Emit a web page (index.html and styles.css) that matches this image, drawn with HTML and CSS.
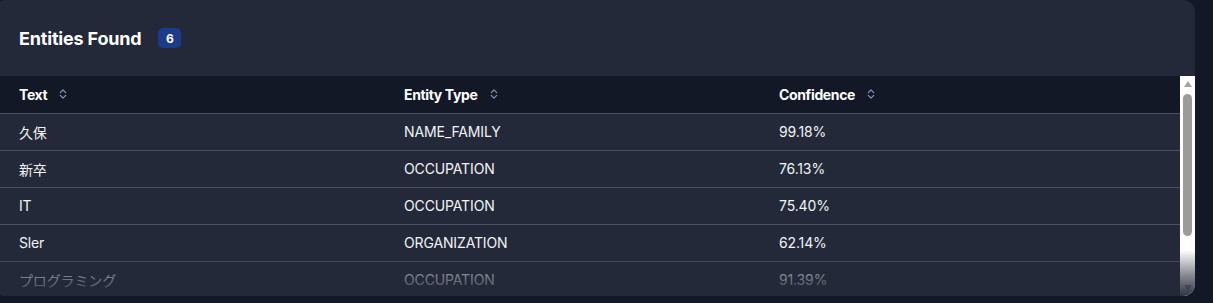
FILE: index.html
```html
<!DOCTYPE html>
<html lang="ja">
<head>
<meta charset="utf-8">
<title>Entities Found</title>
<link rel="stylesheet" href="styles.css">
</head>
<body>
<section class="card">
  <header class="card-head">
    <h2 class="title">Entities Found</h2>
    <span class="badge">6</span>
  </header>
  <div class="table-area">
    <div class="viewport">
      <table class="entities">
        <thead>
          <tr>
            <th class="c1"><span class="th-in">Text <svg class="sort" viewBox="0 0 8 12" width="8" height="12"><path d="M1.3 4.6 4 1.9l2.7 2.7M1.3 7.4 4 10.1l2.7-2.7" fill="none" stroke="currentColor" stroke-width="1.3" stroke-linecap="round" stroke-linejoin="round"/></svg></span></th>
            <th class="c2"><span class="th-in">Entity Type <svg class="sort" viewBox="0 0 8 12" width="8" height="12"><path d="M1.3 4.6 4 1.9l2.7 2.7M1.3 7.4 4 10.1l2.7-2.7" fill="none" stroke="currentColor" stroke-width="1.3" stroke-linecap="round" stroke-linejoin="round"/></svg></span></th>
            <th class="c3"><span class="th-in">Confidence <svg class="sort" viewBox="0 0 8 12" width="8" height="12"><path d="M1.3 4.6 4 1.9l2.7 2.7M1.3 7.4 4 10.1l2.7-2.7" fill="none" stroke="currentColor" stroke-width="1.3" stroke-linecap="round" stroke-linejoin="round"/></svg></span></th>
          </tr>
        </thead>
        <tbody>
          <tr><td>久保</td><td>NAME_FAMILY</td><td>99.18%</td></tr>
          <tr><td>新卒</td><td>OCCUPATION</td><td>76.13%</td></tr>
          <tr><td>IT</td><td>OCCUPATION</td><td>75.40%</td></tr>
          <tr><td>Sler</td><td>ORGANIZATION</td><td>62.14%</td></tr>
          <tr><td>プログラミング</td><td>OCCUPATION</td><td>91.39%</td></tr>
        </tbody>
      </table>
    </div>
    <div class="scrollbar" aria-hidden="true">
      <span class="arrow up"></span>
      <div class="track"><span class="thumb"></span></div>
      <span class="arrow down"></span>
    </div>
    <div class="fade"></div>
  </div>
</section>
</body>
</html>
```

FILE: styles.css
```css
html, body {
  margin: 0;
  padding: 0;
  background: #131826;
  height: 100%;
}
body {
  font-family: Inter, "Noto Sans CJK JP", sans-serif;
  color: #f1f3f7;
  overflow: hidden;
}
.card {
  margin: 0 18px 0 -6px;
  height: 296px;
  background: #232939;
  border-radius: 12px;
  overflow: hidden;
  display: flex;
  flex-direction: column;
}
.card-head {
  height: 76px;
  flex: none;
  display: flex;
  align-items: center;
  padding-left: 25px;
  gap: 17px;
}
.title {
  margin: 0;
  font-size: 18px;
  font-weight: 700;
  letter-spacing: -0.01em;
  color: #ffffff;
}
.badge {
  display: inline-flex;
  align-items: center;
  justify-content: center;
  width: 23px;
  height: 20px;
  border-radius: 5px;
  background: #1e3a8a;
  color: #ffffff;
  font-size: 12px;
  font-weight: 700;
}
.table-area {
  position: relative;
  flex: 1;
  min-height: 0;
  display: flex;
}
.viewport {
  flex: 1;
  min-width: 0;
  overflow: hidden;
  padding-left: 6px;
}
.entities {
  width: 100%;
  border-collapse: collapse;
  table-layout: fixed;
}
.entities th,
.entities td {
  box-sizing: border-box;
}
.entities .c1 { width: 385px; }
.entities .c2 { width: 375px; }
.entities th {
  background: #131826;
  height: 37px;
  padding: 0 19px;
  text-align: left;
  font-size: 14px;
  font-weight: 700;
  letter-spacing: -0.025em;
  color: #ffffff;
  border-bottom: 1px solid #4b5263;
}
.th-in {
  display: inline-flex;
  align-items: center;
  gap: 12px;
}
.sort {
  color: #8192b8;
}
.entities td {
  height: 37px;
  padding: 0 19px;
  font-size: 14px;
  font-weight: 400;
  letter-spacing: -0.01em;
  color: #f1f3f7;
  border-bottom: 1px solid #4b5263;
  white-space: nowrap;
}
.scrollbar {
  flex: none;
  width: 15px;
  background: #ffffff;
  display: flex;
  flex-direction: column;
  align-items: center;
}
.arrow {
  flex: none;
  width: 0;
  height: 0;
  border-left: 4.5px solid transparent;
  border-right: 4.5px solid transparent;
}
.arrow.up {
  margin-top: 5px;
  border-bottom: 6px solid #a3a3a3;
}
.arrow.down {
  margin-bottom: 5px;
  border-top: 6px solid #a3a3a3;
}
.track {
  flex: 1;
  align-self: stretch;
  display: flex;
  flex-direction: column;
  align-items: center;
  padding-top: 7px;
}
.thumb {
  width: 9px;
  height: 142px;
  background: #9b9b9b;
  border-radius: 5px;
}
.fade {
  position: absolute;
  left: 0;
  right: 0;
  bottom: 0;
  height: 46px;
  pointer-events: none;
  background: linear-gradient(to bottom, rgba(35, 41, 57, 0) 0%, rgba(35, 41, 57, 0.55) 55%, rgba(35, 41, 57, 0.95) 100%);
}
```
